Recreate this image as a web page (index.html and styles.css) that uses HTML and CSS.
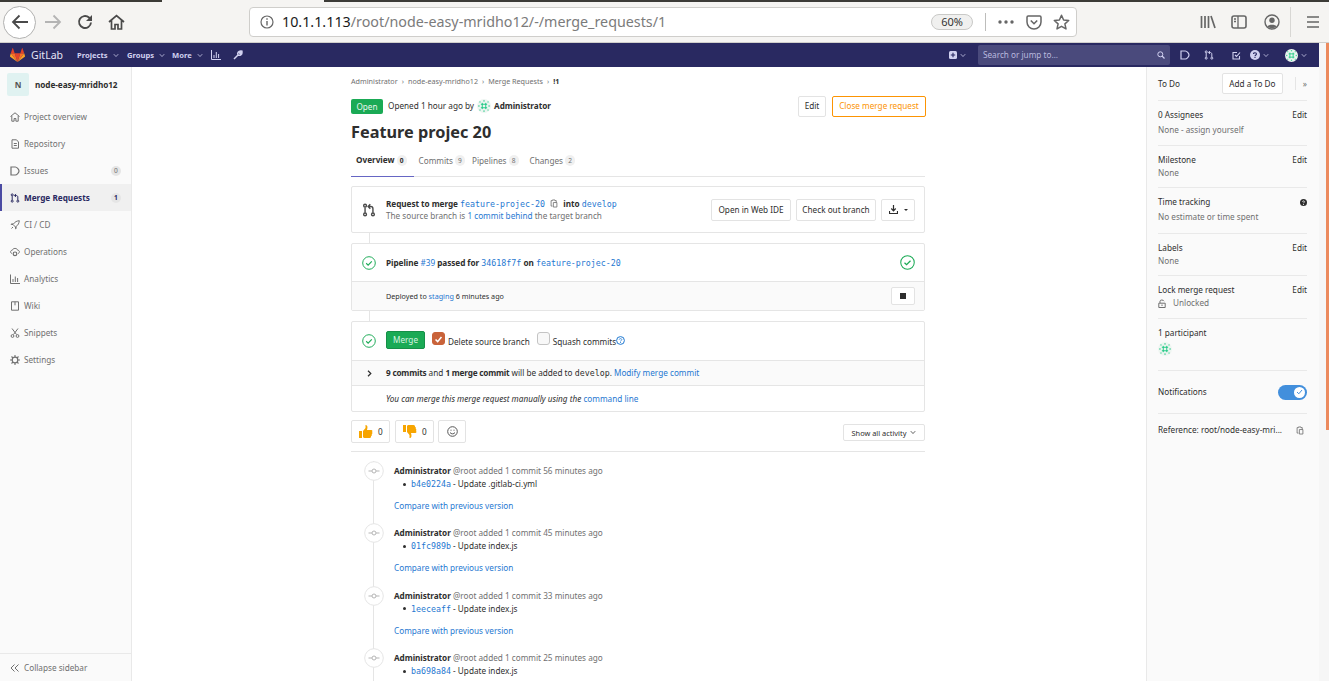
FILE: index.html
```html
<!DOCTYPE html>
<html lang="en">
<head>
<meta charset="utf-8">
<title>Feature projec 20</title>
<link rel="stylesheet" href="styles.css">
</head>
<body>
<svg class="defs" width="0" height="0">
  <symbol id="avatar" viewBox="0 0 20 20">
    <circle cx="10" cy="10" r="10" fill="#eef5f1"/>
    <path d="M7.500 5.500v9M12.500 5.500v9M5.500 7.500h9M5.500 12.500h9" stroke="#14c77f" stroke-width="1.300" fill="none"/>
    <g fill="#14c77f">
      <rect x="9" y="2" width="2" height="1.500"/><rect x="9" y="16.500" width="2" height="1.500"/>
      <rect x="2" y="9" width="1.500" height="2"/><rect x="16.500" y="9" width="1.500" height="2"/>
      <rect x="3.500" y="3.500" width="1.500" height="1.500"/><rect x="15" y="3.500" width="1.500" height="1.500"/>
      <rect x="3.500" y="15" width="1.500" height="1.500"/><rect x="15" y="15" width="1.500" height="1.500"/>
    </g>
  </symbol>
  <symbol id="chev" viewBox="0 0 8 6"><path d="M1 1.2 4 4.4 7 1.2" fill="none" stroke="currentColor" stroke-width="1"/></symbol>
  <symbol id="mr" viewBox="0 0 16 16"><g fill="none" stroke="currentColor" stroke-width="1.6"><circle cx="3.5" cy="13" r="1.6"/><circle cx="12.5" cy="13" r="1.6"/><circle cx="3.5" cy="3" r="1.6"/><path d="M3.5 5v6M12.5 11V6.500C12.500 5 11.500 4 10 4H7.500M9.500 1.500 7 4l2.500 2.500"/></g></symbol>
  <symbol id="ok" viewBox="0 0 16 16"><circle cx="8" cy="8" r="7.200" fill="#fff" stroke="#1aaa55" stroke-width="1.100"/><path d="M4.800 8.300 7 10.400l4.200-4.300" fill="none" stroke="#1aaa55" stroke-width="1.300"/></symbol>
  <symbol id="commit" viewBox="0 0 20 20"><circle cx="10" cy="10" r="9.300" fill="#fff" stroke="#e5e5e5"/><circle cx="10" cy="10" r="2" fill="none" stroke="#b5b5b5"/><path d="M4.500 10H8M12 10h3.500" stroke="#b5b5b5"/></symbol>
  <symbol id="copy" viewBox="0 0 12 14"><path d="M1.500 2.500h2v-1h4v1h2v3M5 5.500h5.500v7H5zM3.500 11h-2V2.500" fill="none" stroke="currentColor" stroke-width="1.300"/></symbol>
  <symbol id="issue" viewBox="0 0 10 10"><path d="M1 1h4.300C6.800 1 9 3.300 9 5S6.800 9 5.300 9H1z" fill="none" stroke="currentColor" stroke-width="1.200"/></symbol>
</svg>

<header class="browser">
  <div class="tabstrip"><span class="strip strip-a"></span><span class="strip strip-b"></span></div>
  <div class="toolbar">
    <span class="back-btn"><svg width="18" height="16" viewBox="0 0 18 16"><path d="M17 8H2M8.500 1.500 2 8l6.500 6.500" fill="none" stroke="#4a4a4a" stroke-width="1.800"/></svg></span>
    <svg class="tb-forward" width="18" height="16" viewBox="0 0 18 16"><path d="M1 8h15M9.500 1.500 16 8l-6.500 6.500" fill="none" stroke="#b4b4b4" stroke-width="1.800"/></svg>
    <svg class="tb-reload" width="16" height="16" viewBox="0 0 16 16"><path d="M14 8.500A6 6 0 1 1 12 3.500L14.500 6" fill="none" stroke="#4a4a4a" stroke-width="1.900"/><path d="M15 1v6H9z" fill="#4a4a4a"/></svg>
    <svg class="tb-home" width="17" height="16" viewBox="0 0 17 16"><path d="M1 8 8.500 1.500 16 8M3.500 6.500V15h3.500v-4.500h3V15h3.500V6.500" fill="none" stroke="#4a4a4a" stroke-width="1.700"/></svg>
    <div class="urlbar">
      <svg class="url-info" width="14" height="14" viewBox="0 0 14 14"><circle cx="7" cy="7" r="6" fill="none" stroke="#666" stroke-width="1.200"/><path d="M7 6v4.500M7 3.300v1.500" stroke="#666" stroke-width="1.400"/></svg>
      <span class="url-text"><span class="url-host">10.1.1.113</span>/root/node-easy-mridho12/-/merge_requests/1</span>
      <span class="zoom-pill">60%</span>
      <span class="url-sep"></span>
      <svg class="url-dots" width="16" height="4" viewBox="0 0 16 4"><g fill="#666"><circle cx="2" cy="2" r="1.700"/><circle cx="8" cy="2" r="1.700"/><circle cx="14" cy="2" r="1.700"/></g></svg>
      <svg class="url-pocket" width="16" height="15" viewBox="0 0 16 15"><path d="M1 2.200C1 1.500 1.500 1 2.200 1h11.600c.7 0 1.200.5 1.200 1.200V7A7 7 0 0 1 1 7z" fill="none" stroke="#666" stroke-width="1.500"/><path d="M4.800 5.500 8 8.700l3.200-3.200" fill="none" stroke="#666" stroke-width="1.600"/></svg>
      <svg class="url-star" width="17" height="16" viewBox="0 0 17 16"><path d="M8.500 1.300 10.600 6l5.100.5-3.800 3.400 1.100 5-4.500-2.600L4 14.900l1.100-5L1.300 6.500 6.400 6z" fill="none" stroke="#666" stroke-width="1.500" stroke-linejoin="round"/></svg>
    </div>
    <svg class="tb-library" width="16" height="14" viewBox="0 0 16 14"><path d="M1.500 1v12M5 1v12M8.500 1v12M11 1l4 12" fill="none" stroke="#666" stroke-width="1.700"/></svg>
    <svg class="tb-sidebar" width="16" height="14" viewBox="0 0 16 14"><rect x="1" y="1" width="14" height="12" rx="2" fill="none" stroke="#666" stroke-width="1.600"/><path d="M7 1v12M3 4h2M3 6.500h2" stroke="#666" stroke-width="1.300"/></svg>
    <svg class="tb-account" width="16" height="16" viewBox="0 0 16 16"><circle cx="8" cy="8" r="7" fill="none" stroke="#666" stroke-width="1.400"/><circle cx="8" cy="6.300" r="2.700" fill="#666"/><path d="M3.300 12.500C4.500 10 11.500 10 12.700 12.500 10.500 14.800 5.500 14.800 3.300 12.500z" fill="#666"/></svg>
    <span class="tb-sep"></span>
    <svg class="tb-menu" width="12" height="12" viewBox="0 0 12 12"><path d="M0 1h12M0 6h12M0 11h12" stroke="#666" stroke-width="1.700"/></svg>
  </div>
</header>

<div class="window">
  <div class="viewport">
    <nav class="navbar">
      <svg class="logo" width="15" height="14" viewBox="0 0 15 14"><path d="M7.500 14 10.300 5.300H4.700z" fill="#e24329"/><path d="M7.500 14 4.700 5.300H.8z" fill="#fc6d26"/><path d="M.8 5.300 0 8c-.1.300 0 .5.200.7L7.500 14z" fill="#fca326"/><path d="M.8 5.300h3.900L3 .2c-.1-.3-.4-.3-.5 0z" fill="#e24329"/><path d="M7.500 14l2.800-8.700h3.900z" fill="#fc6d26"/><path d="M14.200 5.300 15 8c.1.300 0 .5-.2.700L7.500 14z" fill="#fca326"/><path d="M14.200 5.300h-3.900L12 .2c.1-.3.400-.3.500 0z" fill="#e24329"/></svg>
      <span class="brand">GitLab</span>
      <span class="nav-link nav-projects">Projects <svg class="chev" width="6" height="5"><use href="#chev"/></svg></span>
      <span class="nav-link nav-groups">Groups <svg class="chev" width="6" height="5"><use href="#chev"/></svg></span>
      <span class="nav-link nav-more">More <svg class="chev" width="6" height="5"><use href="#chev"/></svg></span>
      <svg class="nav-chart" width="10" height="10" viewBox="0 0 10 10"><path d="M.5 0v9.500H10M3 5v3M5.300 2v6M7.600 4v4" fill="none" stroke="#d1d1f0" stroke-width="1"/></svg>
      <svg class="nav-wrench" width="10" height="10" viewBox="0 0 10 10"><path d="M1 9 5 5M5 5C4 3 5.500.8 8 1L6.300 2.800l1 1L9 2.200C9.200 4.700 7 6 5 5z" fill="none" stroke="#d1d1f0" stroke-width="1.500"/></svg>
      <span class="nav-spacer"></span>
      <svg class="nav-plus" width="8" height="8" viewBox="0 0 8 8"><rect width="8" height="8" rx="1.500" fill="#d1d1f0"/><path d="M4 1.800v4.400M1.800 4h4.400" stroke="#292961" stroke-width="1.100"/></svg>
      <svg class="chev chev-plus" width="6" height="5"><use href="#chev"/></svg>
      <div class="search"><span>Search or jump to…</span><svg width="8" height="8" viewBox="0 0 8 8"><circle cx="3.300" cy="3.300" r="2.500" fill="none" stroke="#d1d1f0"/><path d="M5 5 7.500 7.500" stroke="#d1d1f0" stroke-width="1.200"/></svg></div>
      <svg class="nav-issues" width="10" height="10"><use href="#issue"/></svg>
      <svg class="nav-mr" width="10" height="10"><use href="#mr"/></svg>
      <svg class="nav-todo" width="9" height="9" viewBox="0 0 9 9"><path d="M7.500 5v3H1V1.500h4M3 4l1.500 1.500L8 1.500" fill="none" stroke="#d1d1f0" stroke-width="1.100"/></svg>
      <svg class="nav-help" width="10" height="10" viewBox="0 0 10 10"><circle cx="5" cy="5" r="5" fill="#d1d1f0"/><path d="M3.500 4C3.500 2.300 6.500 2.300 6.500 4 6.500 5 5 5 5 6.200M5 7v1" fill="none" stroke="#292961" stroke-width="1.100"/></svg>
      <svg class="chev chev-help" width="6" height="5"><use href="#chev"/></svg>
      <svg class="nav-avatar" width="13" height="13"><use href="#avatar"/></svg>
      <svg class="chev chev-avatar" width="6" height="5"><use href="#chev"/></svg>
    </nav>

    <div class="layout">
      <aside class="sidebar">
        <div class="project"><span class="tile">N</span><strong>node-easy-mridho12</strong></div>
        <ul class="side-list">
          <li class="side-item"><svg width="10" height="10" viewBox="0 0 10 10"><path d="M.5 4.500 5 .8l4.500 3.700M1.800 4v5.200h2.300V6.500h1.800v2.700h2.300V4" fill="none" stroke="currentColor"/></svg>Project overview</li>
          <li class="side-item"><svg width="10" height="10" viewBox="0 0 10 10"><path d="M2 .8h4.500L8.500 3v6.200H2zM3.800 4.500h3M3.800 6.500h3" fill="none" stroke="currentColor"/></svg>Repository</li>
          <li class="side-item"><svg width="10" height="10"><use href="#issue"/></svg>Issues<span class="count">0</span></li>
          <li class="side-item active"><svg width="10" height="10"><use href="#mr"/></svg>Merge Requests<span class="count">1</span></li>
          <li class="side-item"><svg width="10" height="10" viewBox="0 0 10 10"><path d="M1.500 8.500 3 7M3 4.500C5 1.500 7 1 9.300.7 9 3 8.500 5 5.500 7zM3 4.500H1.200L2.500 3M5.500 7v1.800L7 7.500" fill="none" stroke="currentColor"/></svg>CI / CD</li>
          <li class="side-item"><svg width="10" height="10" viewBox="0 0 10 10"><path d="M2 6.500C0 6 .2 3.300 2.200 3.300 3 .8 7 .8 7.800 3.300 9.800 3.300 10 6 8 6.500" fill="none" stroke="currentColor"/><circle cx="5" cy="6.800" r="1.800" fill="none" stroke="currentColor" stroke-width="1.200"/></svg>Operations</li>
          <li class="side-item"><svg width="10" height="10" viewBox="0 0 10 10"><path d="M.5.500v9H10M3 5v3M5.300 2.500V8M7.600 4v4" fill="none" stroke="currentColor"/></svg>Analytics</li>
          <li class="side-item"><svg width="10" height="10" viewBox="0 0 10 10"><path d="M1.500.8h7v8.400h-7zM5 .8v3.500" fill="none" stroke="currentColor"/></svg>Wiki</li>
          <li class="side-item"><svg width="10" height="10" viewBox="0 0 10 10"><path d="M2 .5 6.500 6.500M8 .5 3.500 6.500" fill="none" stroke="currentColor"/><circle cx="2.500" cy="8" r="1.400" fill="none" stroke="currentColor"/><circle cx="7.500" cy="8" r="1.400" fill="none" stroke="currentColor"/></svg>Snippets</li>
          <li class="side-item"><svg width="10" height="10" viewBox="0 0 10 10"><circle cx="5" cy="5" r="2.800" fill="none" stroke="currentColor" stroke-width="1.200"/><path d="M5 0v2M5 8v2M0 5h2M8 5h2M1.500 1.500 3 3M7 7l1.500 1.500M8.500 1.500 7 3M3 7 1.500 8.500" stroke="currentColor" stroke-width="1.100"/></svg>Settings</li>
        </ul>
        <div class="collapse"><svg width="10" height="8" viewBox="0 0 10 8"><path d="M4.500.5 1 4l3.500 3.500M8.500.5 5 4l3.500 3.500" fill="none" stroke="currentColor"/></svg>Collapse sidebar</div>
      </aside>

      <main class="content">
        <div class="crumbs"><span>Administrator</span><i>›</i><span>node-easy-mridho12</span><i>›</i><span>Merge Requests</span><i>›</i><b>!1</b></div>
        <div class="mr-head">
          <span class="badge-open">Open</span>
          <span class="opened">Opened 1 hour ago by</span>
          <svg class="head-avatar" width="14" height="14"><use href="#avatar"/></svg>
          <strong>Administrator</strong>
          <span class="head-spacer"></span>
          <span class="btn btn-edit">Edit</span>
          <span class="btn btn-close">Close merge request</span>
        </div>
        <h1>Feature projec 20</h1>
        <div class="tabs">
          <span class="tab tab-on">Overview <em>0</em></span>
          <span class="tab tab-commits">Commits <em>9</em></span>
          <span class="tab tab-pipes">Pipelines <em>8</em></span>
          <span class="tab">Changes <em>2</em></span>
        </div>

        <section class="card card-req">
          <svg class="req-icon" width="14" height="14"><use href="#mr"/></svg>
          <div class="req-text">
            <div><b>Request to merge</b> <code>feature-projec-20</code> <svg class="copy copy-inline" width="8" height="9"><use href="#copy"/></svg> <b>into</b> <code>develop</code></div>
            <div class="muted">The source branch is <a>1 commit behind</a> the target branch</div>
          </div>
          <span class="btn btn-ide">Open in Web IDE</span>
          <span class="btn btn-check">Check out branch</span>
          <span class="btn btn-dl"><svg width="9" height="9" viewBox="0 0 9 9"><path d="M4.500 0v5.500M2.300 3.500 4.500 5.800 6.700 3.500M.5 6v2.500h8V6" fill="none" stroke="#2e2e2e" stroke-width="1.200"/></svg><i class="caret"></i></span>
        </section>
        <div class="link-line"></div>
        <section class="card card-pipe">
          <div class="pipe-top">
            <svg width="14" height="14"><use href="#ok"/></svg>
            <div class="pipe-text"><b>Pipeline</b> <a>#39</a> <b>passed for</b> <code>34618f7f</code> <b>on</b> <code>feature-projec-20</code></div>
            <svg width="15" height="15"><use href="#ok"/></svg>
          </div>
          <div class="pipe-bottom">
            <span>Deployed to <a>staging</a> 6 minutes ago</span>
            <span class="btn btn-stop"><i></i></span>
          </div>
        </section>
        <div class="link-line"></div>
        <section class="card card-merge">
          <div class="merge-top">
            <svg width="14" height="14"><use href="#ok"/></svg>
            <span class="btn-merge">Merge</span>
            <span class="check check-on"><svg width="13" height="13" viewBox="0 0 13 13"><path d="M3 6.500 5.500 9 10 3.500" fill="none" stroke="#fff" stroke-width="1.800"/></svg></span>
            <span class="check-label">Delete source branch</span>
            <span class="check"></span>
            <span class="check-label">Squash commits</span>
            <svg class="help" width="9" height="9" viewBox="0 0 9 9"><circle cx="4.500" cy="4.500" r="3.900" fill="none" stroke="#1f78d1"/><path d="M3.200 3.600C3.200 2.300 5.800 2.300 5.800 3.600 5.800 4.500 4.500 4.500 4.500 5.500M4.500 6v1" fill="none" stroke="#1f78d1" stroke-width=".8"/></svg>
          </div>
          <div class="merge-info">
            <svg width="5" height="7" viewBox="0 0 5 7"><path d="M1 .8 3.800 3.500 1 6.200" fill="none" stroke="#2e2e2e" stroke-width="1.200"/></svg>
            <span><b>9 commits</b> and <b>1 merge commit</b> will be added to <code class="dark">develop</code>. <a>Modify merge commit</a></span>
          </div>
          <div class="merge-note"><em>You can merge this merge request manually using the</em> <a>command line</a></div>
        </section>

        <div class="reactions">
          <span class="react react-up"><svg width="15" height="15" viewBox="0 0 15 15"><path d="M1 7h3v7H1zM5 7l2.500-3V1c2-.3 2.500 2 1.500 5h4.300c1.200 0 1.500 1.500.7 2 .7.700.5 1.800-.3 2.200.4.800 0 1.700-.7 2 .2 1-.5 1.800-1.500 1.800H7C6 14 5 13.500 5 13z" fill="#f7a500"/></svg>0</span>
          <span class="react react-down"><svg width="15" height="15" viewBox="0 0 15 15"><path d="M1 1h3v7H1zM5 8l2.500 3v3c2 .3 2.500-2 1.500-5h4.300c1.200 0 1.500-1.500.7-2 .7-.7.500-1.800-.3-2.200.4-.8 0-1.700-.7-2 .2-1-.5-1.800-1.500-1.800H7C6 1 5 1.500 5 2z" fill="#f7a500"/></svg>0</span>
          <span class="react react-add"><svg width="11" height="11" viewBox="0 0 11 11"><circle cx="5.500" cy="5.500" r="4.800" fill="none" stroke="#555"/><path d="M3 6.500C4 8.300 7 8.300 8 6.500" fill="none" stroke="#555"/><path d="M4 3.700v1M7 3.700v1" stroke="#555"/></svg></span>
          <span class="head-spacer"></span>
          <span class="btn btn-activity">Show all activity <svg class="chev" width="6" height="5"><use href="#chev"/></svg></span>
        </div>

        <ul class="timeline">
          <li class="note">
            <svg class="note-icon" width="20" height="20"><use href="#commit"/></svg>
            <div class="note-head"><b>Administrator</b> <span>@root added 1 commit 56 minutes ago</span></div>
            <div class="note-commit"><i></i><code>b4e0224a</code> - Update .gitlab-ci.yml</div>
            <a class="note-compare">Compare with previous version</a>
          </li>
          <li class="note">
            <svg class="note-icon" width="20" height="20"><use href="#commit"/></svg>
            <div class="note-head"><b>Administrator</b> <span>@root added 1 commit 45 minutes ago</span></div>
            <div class="note-commit"><i></i><code>01fc989b</code> - Update index.js</div>
            <a class="note-compare">Compare with previous version</a>
          </li>
          <li class="note">
            <svg class="note-icon" width="20" height="20"><use href="#commit"/></svg>
            <div class="note-head"><b>Administrator</b> <span>@root added 1 commit 33 minutes ago</span></div>
            <div class="note-commit"><i></i><code>1eeceaff</code> - Update index.js</div>
            <a class="note-compare">Compare with previous version</a>
          </li>
          <li class="note">
            <svg class="note-icon" width="20" height="20"><use href="#commit"/></svg>
            <div class="note-head"><b>Administrator</b> <span>@root added 1 commit 25 minutes ago</span></div>
            <div class="note-commit"><i></i><code>ba698a84</code> - Update index.js</div>
          </li>
        </ul>
      </main>

      <aside class="rail">
        <div class="rail-sec sec-todo"><span>To Do</span><span class="btn btn-todo">Add a To Do</span><i class="rail-sep"></i><span class="rail-expand">»</span></div>
        <div class="rail-sec sec-assign"><div class="rail-row"><span>0 Assignees</span><span>Edit</span></div><div class="rail-val">None - assign yourself</div></div>
        <div class="rail-sec sec-mile"><div class="rail-row"><span>Milestone</span><span>Edit</span></div><div class="rail-val">None</div></div>
        <div class="rail-sec sec-time"><div class="rail-row"><span>Time tracking</span><svg width="7" height="7" viewBox="0 0 7 7"><circle cx="3.500" cy="3.500" r="3.500" fill="#2e2e2e"/><path d="M2.500 2.800C2.500 1.600 4.500 1.600 4.500 2.800 4.500 3.500 3.500 3.500 3.500 4.300M3.500 5v1" fill="none" stroke="#fff" stroke-width=".8"/></svg></div><div class="rail-val">No estimate or time spent</div></div>
        <div class="rail-sec sec-labels"><div class="rail-row"><span>Labels</span><span>Edit</span></div><div class="rail-val">None</div></div>
        <div class="rail-sec sec-lock"><div class="rail-row"><span>Lock merge request</span><span>Edit</span></div><div class="rail-val lock-val"><svg width="8" height="9" viewBox="0 0 8 9"><path d="M2 4V2.200C2 .6 5.500.6 6 2.200M.8 4.200h6.400v4.300H.8z" fill="none" stroke="#707070"/><path d="M4 5.500v1.500" stroke="#707070"/></svg>Unlocked</div></div>
        <div class="rail-sec sec-part"><div>1 participant</div><svg width="14" height="14"><use href="#avatar"/></svg></div>
        <div class="rail-sec sec-notify"><span>Notifications</span><span class="toggle"><i><svg width="7" height="6" viewBox="0 0 7 6"><path d="M1 3 2.800 4.800 6 1" fill="none" stroke="#428fdc" stroke-width="1"/></svg></i></span></div>
        <div class="rail-ref"><span>Reference: root/node-easy-mri...</span><svg class="copy" width="8" height="9"><use href="#copy"/></svg></div>
      </aside>
    </div>
  </div>
  <div class="scrolltrack"><span class="scrollthumb"></span></div>
</div>
</body>
</html>
```
FILE: styles.css
```css
* { box-sizing: border-box; }
html, body { margin: 0; height: 100%; }
body {
  width: 1329px; height: 681px; overflow: hidden;
  display: flex; flex-direction: column;
  font-family: "Noto Sans", "Open Sans", sans-serif;
  font-size: 8.2px; line-height: 12px; color: #2e2e2e; background: #fff;
}
.defs { position: absolute; }
a { color: #1f78d1; }
b, strong { font-weight: 700; letter-spacing: -0.05px; }
code { font-family: "DejaVu Sans Mono", monospace; font-size: 8.3px; color: #1f78d1; }
code.dark { color: #2e2e2e; }
ul { list-style: none; margin: 0; padding: 0; }

/* browser chrome */
.browser { height: 43px; flex: none; background: #f5f4f2; border-bottom: 1px solid #d0cfcc; }
.tabstrip { height: 2px; display: flex; background: #f5f4f2; }
.strip { background: #3c3b37; height: 2px; }
.strip-a { width: 162px; margin-right: 162px; }
.strip-b { flex: 1; }
.toolbar { height: 40px; display: flex; align-items: center; padding-left: 3px; }
.back-btn { width: 33px; height: 33px; flex: none; border: 1px solid #b1b1b0; border-radius: 50%; background: #fff; display: flex; align-items: center; justify-content: center; margin-top: 0; }
.tb-forward { margin-left: 8px; flex: none; }
.tb-reload { margin-left: 15px; flex: none; }
.tb-home { margin-left: 15px; flex: none; }
.urlbar { width: 828px; height: 30px; margin-left: 124px; flex: none; background: #fff; border: 1px solid #cfcecb; border-radius: 4px; display: flex; align-items: center; padding-left: 10px; }
.url-info { flex: none; }
.url-text { margin-left: 8px; font-size: 14.300px; color: #7b7b7b; width: 641px; white-space: nowrap; flex: none; line-height: 20px; }
.url-host { color: #1a1a1a; }
.zoom-pill { width: 42px; height: 16px; flex: none; margin-left: 8px; border: 1px solid #c9c9c7; border-radius: 8px; background: #f0f0ef; font-size: 11px; line-height: 14px; text-align: center; color: #333; }
.url-sep { width: 1px; height: 18px; margin-left: 12px; background: #bdbdbb; flex: none; }
.url-dots { margin-left: 12px; flex: none; }
.url-pocket { margin-left: 12px; flex: none; }
.url-star { margin-left: 11px; flex: none; }
.tb-library { margin-left: 123px; flex: none; }
.tb-sidebar { margin-left: 15px; flex: none; }
.tb-account { margin-left: 17px; flex: none; }
.tb-sep { width: 1px; height: 30px; margin-left: 10px; background: #d8d7d4; flex: none; }
.tb-menu { margin-left: 16px; flex: none; }

/* window */
.window { flex: 1; display: flex; min-height: 0; }
.viewport { width: 1319px; flex: none; display: flex; flex-direction: column; min-height: 0; }
.scrolltrack { flex: 1; background: #f6f6f6; display: flex; justify-content: flex-end; }
.scrollthumb { width: 3px; height: 387px; background: #ec8a5e; }

/* navbar */
.navbar { height: 24px; flex: none; background: #292961; color: #d1d1f0; display: flex; align-items: center; padding-left: 10px; }
.logo { flex: none; }
.brand { font-size: 10.5px; color: #e6e6f5; margin-left: 6px; width: 46px; }
.nav-link { font-size: 7.6px; font-weight: 700; display: flex; align-items: center; gap: 5px; white-space: nowrap; }
.nav-projects { width: 50px; }
.nav-groups { width: 45px; }
.nav-more { width: 39px; }
.chev { flex: none; color: #d1d1f0; }
.btn .chev { color: #2e2e2e; }
.nav-wrench { margin-left: 12px; }
.nav-spacer { flex: 1; }
.chev-plus { margin-left: 3px; }
.search { width: 192px; height: 20px; margin-left: 12px; background: #4a4a7c; border-radius: 2px; display: flex; align-items: center; justify-content: space-between; padding: 0 5px 0 5px; color: #b9b9de; font-size: 8.2px; }
.nav-issues { margin-left: 10px; }
.nav-mr { margin-left: 14px; }
.nav-todo { margin-left: 18px; }
.nav-help { margin-left: 9px; }
.chev-help { margin-left: 3px; }
.nav-avatar { margin-left: 16px; }
.chev-avatar { margin-left: 3px; margin-right: 12px; }

.layout { flex: 1; display: flex; min-height: 0; }

/* left sidebar */
.sidebar { width: 132px; flex: none; background: #fafafa; border-right: 1px solid #e9e9e9; display: flex; flex-direction: column; color: #707070; }
.project { display: flex; align-items: center; height: 23px; margin: 6px 0 0 7px; color: #2e2e2e; }
.tile { width: 22px; height: 23px; border-radius: 2px; background: #e0f2f1; color: #555; font-weight: 700; text-align: center; line-height: 23px; margin-right: 6px; }
.side-list { margin-top: 7px; flex: 1; }
.side-item { height: 27px; display: flex; align-items: center; padding: 0 10px; gap: 4px; }
.side-item svg { flex: none; }
.side-item.active { background: #f0f0f0; color: #292961; font-weight: 700; border-left: 2px solid #4b4ba3; padding-left: 8px; }
.count { margin-left: auto; width: 10px; height: 10px; border-radius: 5px; background: #e5e5e5; font-size: 6.600px; line-height: 10px; text-align: center; }
.collapse { height: 28px; border-top: 1px solid #e9e9e9; display: flex; align-items: center; gap: 4px; padding-left: 10px; }

/* center */
.content { flex: 1; min-width: 0; padding: 8px 221px 0 219px; overflow: hidden; }
.crumbs { height: 12px; display: flex; align-items: center; font-size: 7.2px; color: #707070; white-space: nowrap; }
.crumbs i { font-style: normal; margin: 0 4px; }
.crumbs b { color: #2e2e2e; }
.mr-head { display: flex; align-items: center; height: 22px; margin: 8px -1px 0 0; white-space: nowrap; }
.badge-open { width: 32px; height: 15px; background: #1aaa55; color: #e8f7ee; border-radius: 2px; text-align: center; line-height: 15px; }
.opened { margin-left: 5px; }
.head-avatar { margin-left: 3px; }
.mr-head strong { margin-left: 3px; }
.head-spacer { flex: 1; }
.btn { display: inline-flex; align-items: center; justify-content: center; background: #fff; border: 1px solid #e3e3e3; border-radius: 2px; white-space: nowrap; color: #2e2e2e; }
.btn-edit { width: 28px; height: 21px; }
.btn-close { width: 94px; height: 21px; margin-left: 6px; border-color: #fc9403; color: #fc9403; }
h1 { margin: 4px 0 0; font-size: 16.300px; line-height: 22px; font-weight: 700; color: #2e2e2e; height: 22px; }
.tabs { display: flex; height: 33px; margin-top: 1px; border-bottom: 1px solid #e5e5e5; color: #707070; }
.tab { display: flex; align-items: center; gap: 2px; padding: 0 5px; height: 33px; white-space: nowrap; }
.tab em { font-style: normal; font-size: 6.600px; width: 10px; height: 11px; flex: none; line-height: 11px; border-radius: 6px; background: #f0f0f0; text-align: center; }
.tab-on { color: #2e2e2e; font-weight: 700; border-bottom: 1px solid #6666c4; padding-right: 7px; }
.tab-commits { padding-right: 2px; }
.tab-pipes { padding-right: 6px; }
.card { border: 1px solid #e5e5e5; border-radius: 2px; background: #fff; }
.link-line { width: 1px; height: 10px; margin-left: 18px; background: #e5e5e5; }
.card-req { margin-top: 9px; height: 47px; display: flex; align-items: center; padding: 0 9px 0 10px; }
.req-icon { color: #4a4a4a; flex: none; margin-right: 10px; }
.req-text { flex: 1; white-space: nowrap; }
.muted { color: #707070; }
.copy { color: #707070; vertical-align: -1px; }
.copy-inline { margin: 0 3px; }
.btn-ide { width: 80px; height: 22px; }
.btn-check { width: 80px; height: 22px; margin-left: 5px; }
.btn-dl { width: 34px; height: 22px; margin-left: 5px; gap: 6px; }
.caret { width: 0; height: 0; border: 2.500px solid transparent; border-top-color: #2e2e2e; border-bottom: 0; }
.card-pipe { height: 68px; }
.pipe-top { height: 38px; display: flex; align-items: center; padding: 0 9px 0 10px; border-bottom: 1px solid #e5e5e5; }
.pipe-text { flex: 1; margin-left: 10px; white-space: nowrap; }
.pipe-bottom { height: 28px; display: flex; align-items: center; justify-content: space-between; background: #fafafa; padding: 0 9px 0 34px; font-size: 7.200px; }
.btn-stop { width: 24px; height: 18px; }
.btn-stop i { width: 6px; height: 6px; background: #2e2e2e; }
.card-merge { height: 91px; }
.merge-top { height: 39px; display: flex; align-items: center; padding: 0 0 1px 10px; border-bottom: 1px solid #e5e5e5; white-space: nowrap; }
.btn-merge { width: 39px; height: 18px; margin: -2px 0 0 10px; background: #1aaa55; border: 1px solid #168f48; border-radius: 2px; color: #d6f3e2; text-align: center; line-height: 16px; }
.check { width: 13px; height: 13px; border: 1px solid #c4c4c4; border-radius: 3px; background: #f8f8f8; margin-top: -4px; }
.check-on { margin-left: 7px; background: #c9633a; border-color: #c9633a; display: flex; }
.check-label { margin: 0 7px 0 3px; color: #2e2e2e; padding-top: 3px; }
.help { margin-left: -7px; }
.merge-info { height: 25px; display: flex; align-items: center; padding-left: 15px; gap: 14px; background: #fafafa; border-bottom: 1px solid #e5e5e5; white-space: nowrap; }
.merge-info b { letter-spacing: -0.2px; }
.merge-note { height: 25px; padding-left: 34px; line-height: 25px; }
.reactions { height: 32px; margin-top: 8px; display: flex; align-items: flex-start; border-bottom: 1px solid #e5e5e5; }
.react { height: 23px; display: flex; align-items: center; gap: 5px; border: 1px solid #e3e3e3; border-radius: 2px; padding-left: 6px; background: #fff; color: #2e2e2e; }
.react-up { width: 39px; }
.react-down { width: 39px; margin-left: 5px; }
.react-add { width: 28px; margin-left: 4px; padding-left: 8px; }
.btn-activity { width: 82px; height: 17px; margin-top: 4px; font-size: 7.400px; gap: 4px; }
.timeline { margin-left: 22px; padding-top: 9px; position: relative; }
.note { position: relative; height: 62.400px; padding-left: 21px; }
.note::before { content: ""; position: absolute; left: 0; top: 0; bottom: 0; width: 1px; background: #e5e5e5; }
.note-icon { position: absolute; left: -9.500px; top: 0; }
.note-head { padding-top: 4px; white-space: nowrap; }
.note-head span { color: #707070; }
.note-commit { margin-top: 1px; padding-left: 9px; display: flex; align-items: center; white-space: pre; }
.note-commit i { width: 3px; height: 3px; border-radius: 50%; background: #2e2e2e; margin-right: 5px; }
.note-compare { display: block; margin-top: 10px; }

/* right rail */
.rail { width: 173px; flex: none; background: #fafafa; border-left: 1px solid #e9e9e9; padding: 0 12px 0 11px; white-space: nowrap; }
.rail-sec { border-bottom: 1px solid #e9e9e9; }
.rail-row { display: flex; justify-content: space-between; align-items: center; }
.rail-val { color: #707070; }
.sec-todo { height: 34px; display: flex; align-items: center; }
.btn-todo { width: 61px; height: 21px; margin-left: auto; }
.rail-sep { width: 1px; height: 13px; background: #e5e5e5; margin-left: 12px; }
.rail-expand { margin-left: 7px; color: #707070; }
.sec-assign { height: 45px; padding-top: 8px; }
.sec-assign .rail-val { margin-top: 3px; }
.sec-mile { height: 42px; padding-top: 8px; }
.sec-mile .rail-val { margin-top: 1px; }
.sec-time { height: 46px; padding-top: 8px; }
.sec-time .rail-val { margin-top: 3px; }
.sec-labels { height: 42px; padding-top: 8px; }
.sec-labels .rail-val { margin-top: 1px; }
.sec-lock { height: 43px; padding-top: 8px; }
.lock-val { display: flex; align-items: center; gap: 7px; margin-top: 1px; }
.sec-part { height: 52px; padding-top: 8px; }
.sec-part svg { margin-top: 3px; display: block; }
.sec-notify { height: 43px; display: flex; align-items: center; justify-content: space-between; }
.toggle { width: 29px; height: 15px; border-radius: 8px; background: #428fdc; display: flex; justify-content: flex-end; align-items: center; padding-right: 2px; }
.toggle i { width: 11px; height: 11px; border-radius: 50%; background: #fff; display: flex; align-items: center; justify-content: center; }
.rail-ref { display: flex; justify-content: space-between; align-items: center; padding: 10px 3px 0 0; }
```
